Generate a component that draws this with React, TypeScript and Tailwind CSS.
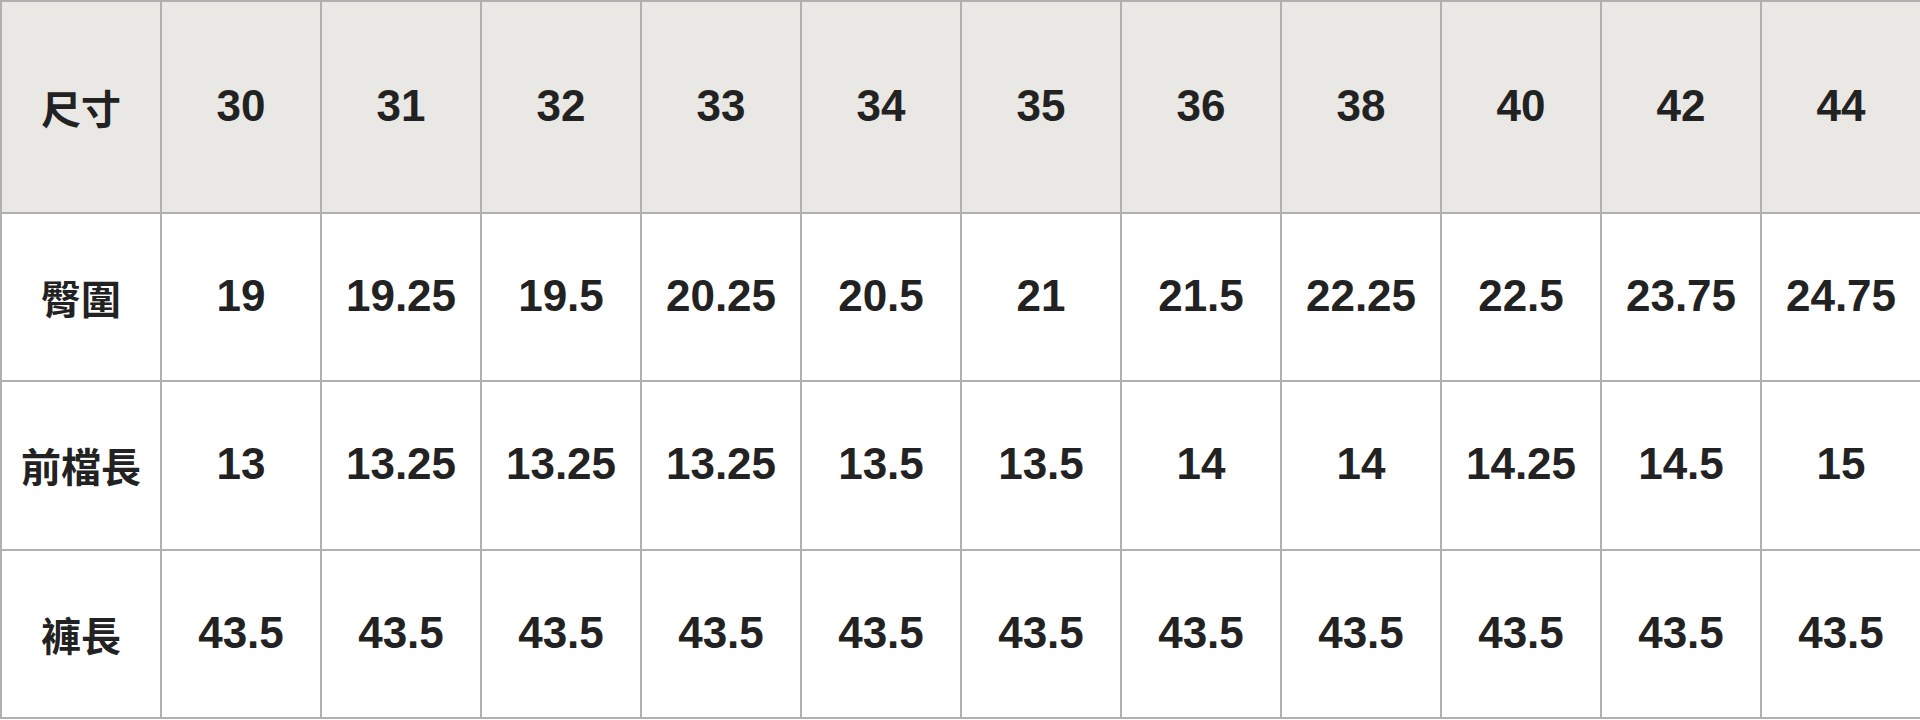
const sizes = ['30', '31', '32', '33', '34', '35', '36', '38', '40', '42', '44'];

const rows: { label: string; values: string[] }[] = [
  { label: '臀圍', values: ['19', '19.25', '19.5', '20.25', '20.5', '21', '21.5', '22.25', '22.5', '23.75', '24.75'] },
  { label: '前檔長', values: ['13', '13.25', '13.25', '13.25', '13.5', '13.5', '14', '14', '14.25', '14.5', '15'] },
  { label: '褲長', values: ['43.5', '43.5', '43.5', '43.5', '43.5', '43.5', '43.5', '43.5', '43.5', '43.5', '43.5'] },
];

const cell = 'border-2 border-[#b0b0b0] text-center align-middle p-0';
const num = "font-['Liberation_Sans',Arial,sans-serif] text-[44px] font-bold leading-none pb-[2px]";
const cjk = "font-['Noto_Sans_CJK_TC','Noto_Sans_CJK_SC',sans-serif] text-[40px] font-bold leading-none";

export default function App() {
  return (
    <div className="w-[1920px] h-[720px] bg-white text-[#222222] overflow-hidden">
      <table className="w-[1919px] h-[719px] table-fixed border-collapse">
        <thead>
          <tr className="h-[212px] bg-[#e9e8e4]">
            <th className={`${cell} ${cjk} w-[160px]`}>尺寸</th>
            {sizes.map(s => (
              <th key={s} className={`${cell} ${num} w-[160px]`}>{s}</th>
            ))}
          </tr>
        </thead>
        <tbody>
          {rows.map(r => (
            <tr key={r.label} className="h-[168px] bg-white">
              <td className={`${cell} ${cjk}`}>{r.label}</td>
              {r.values.map((v, i) => (
                <td key={i} className={`${cell} ${num}`}>{v}</td>
              ))}
            </tr>
          ))}
        </tbody>
      </table>
    </div>
  );
}
